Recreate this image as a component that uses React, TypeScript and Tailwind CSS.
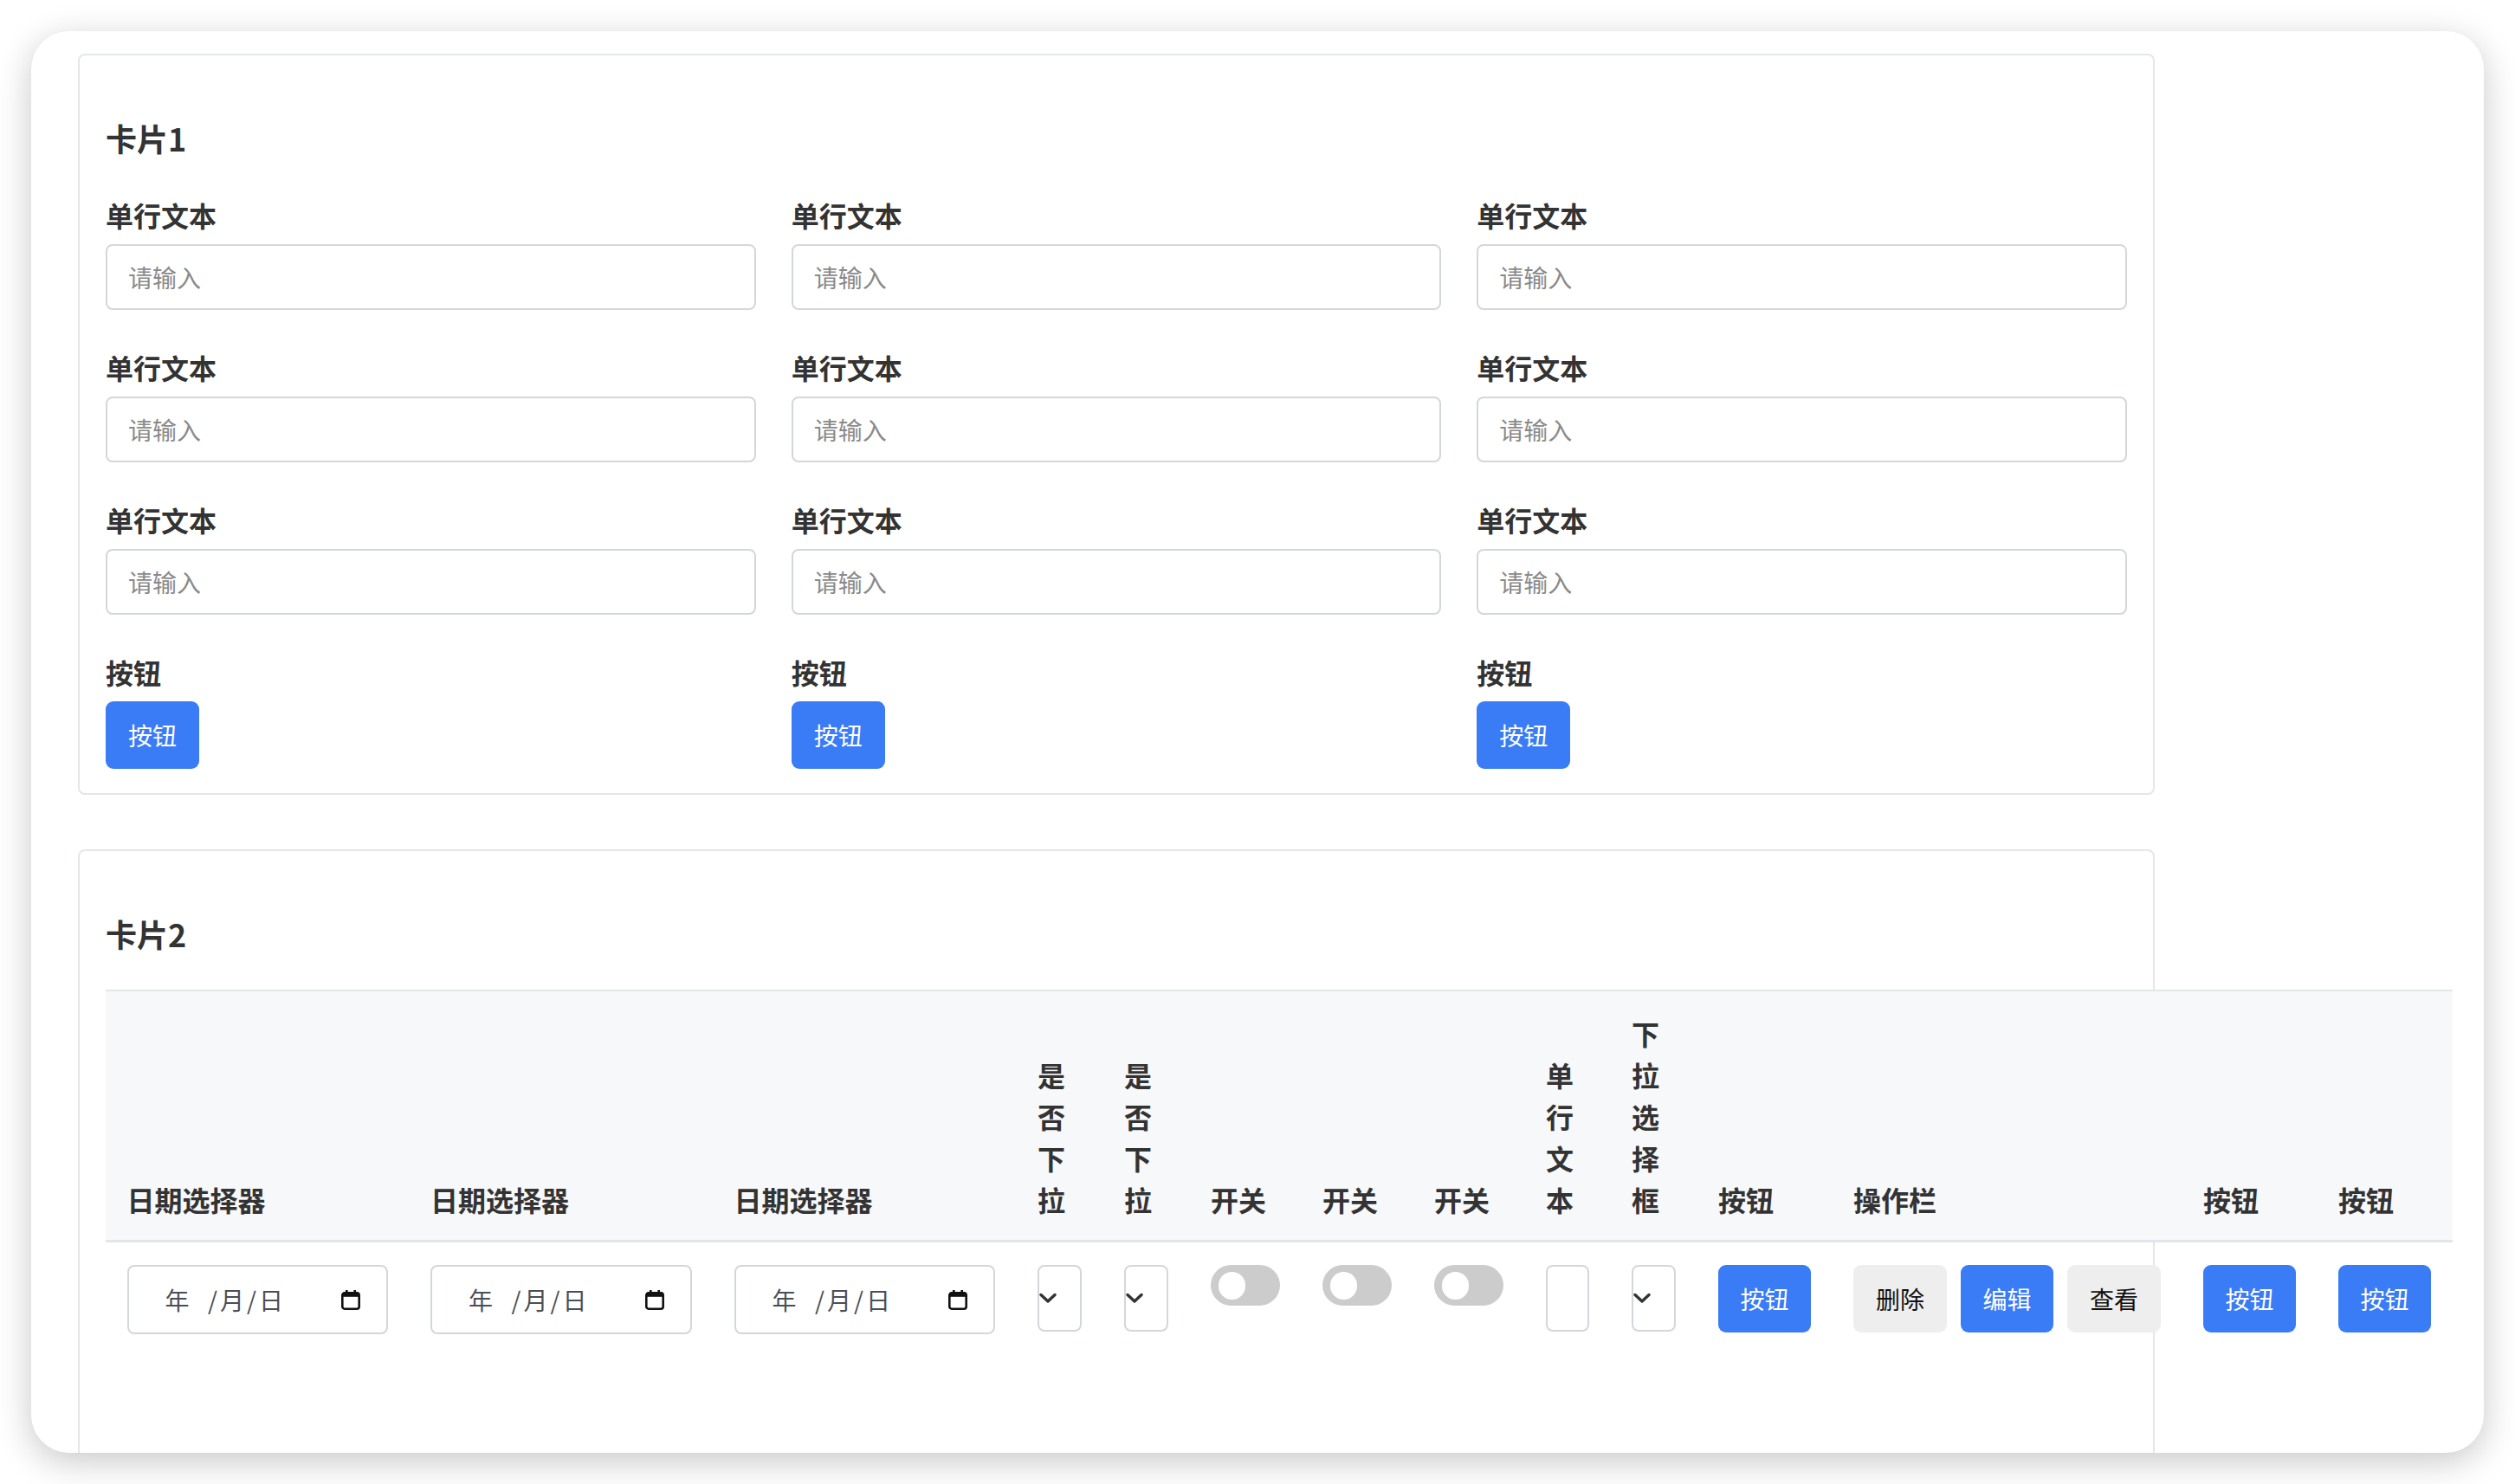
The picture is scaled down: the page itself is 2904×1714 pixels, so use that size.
import React from 'react';

const FONT = "font-['Noto_Sans_CJK_SC','Noto_Sans',sans-serif]";

function TextField() {
  return (
    <div className="flex flex-col">
      <div className="mb-[10px] text-[32px] font-semibold leading-[48px] text-[#333]">单行文本</div>
      <div className="flex h-[76px] items-center rounded-[8px] border-2 border-[#d3d7dc] bg-white px-[24px] text-[28px] text-[#8a8a8a]">
        请输入
      </div>
    </div>
  );
}

function BlueButton({ label = '按钮', w = 'w-[108px]' }: { label?: string; w?: string }) {
  return (
    <button
      type="button"
      className={`flex h-[78px] ${w} shrink-0 items-center justify-center rounded-[9px] bg-[#3a7bf6] text-[28px] text-white`}
    >
      {label}
    </button>
  );
}

function GrayButton({ label }: { label: string }) {
  return (
    <button
      type="button"
      className="flex h-[78px] w-[108px] shrink-0 items-center justify-center rounded-[9px] bg-[#eeeeee] text-[28px] text-[#111]"
    >
      {label}
    </button>
  );
}

function ButtonField() {
  return (
    <div className="flex flex-col items-start">
      <div className="mb-[10px] text-[32px] font-semibold leading-[48px] text-[#333]">按钮</div>
      <BlueButton />
    </div>
  );
}

function CalendarIcon() {
  return (
    <svg width="22" height="23" viewBox="0 0 22 23" fill="none">
      <rect x="5" y="0" width="2.6" height="5" fill="#111" />
      <rect x="14.4" y="0" width="2.6" height="5" fill="#111" />
      <rect x="1.3" y="3.3" width="19.4" height="18.4" rx="2.6" stroke="#111" strokeWidth="2.6" />
      <rect x="1.3" y="3.3" width="19.4" height="4.5" fill="#111" />
    </svg>
  );
}

function DateInput() {
  return (
    <div className="flex h-[80px] w-[301.5px] items-center justify-between rounded-[8px] border-2 border-[#d3d7dc] bg-white pl-[42px] pr-[30px]">
      <span className="text-[28px] tracking-[3px] text-[#4a4f57]">
        年&nbsp;&nbsp;/月/日
      </span>
      <CalendarIcon />
    </div>
  );
}

function SelectBox() {
  return (
    <div className="flex h-[77px] w-[51px] items-center rounded-[8px] border-2 border-[#d3d7dc] bg-white">
      <svg width="20" height="13" viewBox="0 0 20 13" fill="none">
        <path d="M2 2.5 L10 10 L18 2.5" stroke="#333" strokeWidth="3.4" strokeLinecap="round" strokeLinejoin="round" />
      </svg>
    </div>
  );
}

function Toggle() {
  return (
    <div className="flex h-[47px] w-[80px] items-center rounded-full bg-[#cccccc] pl-[9px]">
      <div className="h-[32px] w-[31px] rounded-full bg-white" />
    </div>
  );
}

function SmallInput() {
  return <div className="h-[77px] w-[50px] rounded-[8px] border-2 border-[#d3d7dc] bg-white" />;
}

const headers = [
  '日期选择器',
  '日期选择器',
  '日期选择器',
  '是否下拉',
  '是否下拉',
  '开关',
  '开关',
  '开关',
  '单行文本',
  '下拉选择框',
  '按钮',
  '操作栏',
  '按钮',
  '按钮',
];

const thClass =
  'border-t-2 border-b-[3px] border-[#e2e5e9] bg-[#f7f8fa] px-[24.5px] pt-[24px] pb-[23px] text-left align-bottom text-[32px] font-semibold leading-[48px] text-[#333]';
const tdClass = 'px-[24.5px] pt-[26px] align-top';

export default function App() {
  return (
    <div className={`h-[1714px] w-full overflow-hidden bg-white p-[36px] ${FONT}`}>
      <div className="h-[1642px] w-[2832px] overflow-hidden rounded-[44px] bg-white shadow-[0_10px_40px_rgba(0,0,0,0.22)]">
        <div className="flex flex-col gap-[63px] pl-[54px] pt-[26px]">
          {/* Card 1 */}
          <div className="w-[2398px] rounded-[8px] border-2 border-[#e3e6ea] bg-white px-[30px] pt-[30px] pb-[28px]">
            <div className="mt-[38px] mb-[38px] text-[36px] font-bold leading-[54px] text-[#333]">卡片1</div>
            <div className="grid grid-cols-3 gap-x-[41px] gap-y-[42px]">
              {Array.from({ length: 9 }).map((_, i) => (
                <TextField key={i} />
              ))}
              <ButtonField />
              <ButtonField />
              <ButtonField />
            </div>
          </div>

          {/* Card 2 */}
          <div className="h-[800px] w-[2398px] rounded-[8px] border-2 border-[#e3e6ea] px-[30px] pt-[30px]">
            <div className="mt-[38px] mb-[38px] text-[36px] font-bold leading-[54px] text-[#333]">卡片2</div>
            <table className="border-separate border-spacing-0">
              <thead>
                <tr>
                  {headers.map((h, i) => (
                    <th key={i} className={thClass}>
                      {h}
                    </th>
                  ))}
                </tr>
              </thead>
              <tbody>
                <tr>
                  <td className={tdClass}>
                    <DateInput />
                  </td>
                  <td className={tdClass}>
                    <DateInput />
                  </td>
                  <td className={tdClass}>
                    <DateInput />
                  </td>
                  <td className={tdClass}>
                    <SelectBox />
                  </td>
                  <td className={tdClass}>
                    <SelectBox />
                  </td>
                  <td className={tdClass}>
                    <Toggle />
                  </td>
                  <td className={tdClass}>
                    <Toggle />
                  </td>
                  <td className={tdClass}>
                    <Toggle />
                  </td>
                  <td className={tdClass}>
                    <SmallInput />
                  </td>
                  <td className={tdClass}>
                    <SelectBox />
                  </td>
                  <td className={tdClass}>
                    <BlueButton w="w-[107px]" />
                  </td>
                  <td className={tdClass}>
                    <div className="flex gap-[16px]">
                      <GrayButton label="删除" />
                      <BlueButton label="编辑" w="w-[107px]" />
                      <GrayButton label="查看" />
                    </div>
                  </td>
                  <td className={tdClass}>
                    <BlueButton w="w-[107px]" />
                  </td>
                  <td className={tdClass}>
                    <BlueButton w="w-[107px]" />
                  </td>
                </tr>
              </tbody>
            </table>
          </div>
        </div>
      </div>
    </div>
  );
}
